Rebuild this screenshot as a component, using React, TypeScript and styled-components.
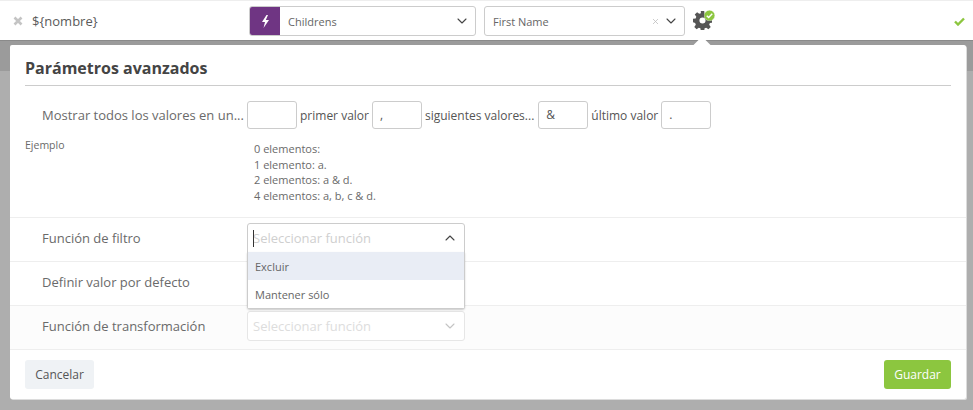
import React from "react";
import styled, { createGlobalStyle } from "styled-components";
import { ChevronDown, ChevronUp, X } from "lucide-react";

const GlobalStyle = createGlobalStyle`
  html, body {
    margin: 0;
    padding: 0;
    height: 100%;
    overflow: hidden;
  }
  body {
    font-family: "Open Sans", "Liberation Sans", sans-serif;
    color: #555;
    background: #aeaeae;
  }
  * {
    box-sizing: border-box;
  }
`;

const Page = styled.div`
  width: 973px;
  height: 410px;
  display: flex;
  flex-direction: column;
`;

const TopBar = styled.div`
  height: 41px;
  flex: none;
  background: #fff;
  border-top: 1px solid #eeeeee;
  border-bottom: 1px solid #8a8a8a;
  display: flex;
  align-items: center;
  padding: 1px 8px 0 13px;
`;

const RemoveIcon = styled.svg`
  width: 10px;
  height: 10px;
  flex: none;
`;

const VarName = styled.span`
  font-size: 13px;
  color: #5a5a5a;
  margin-left: 9px;
  width: 217px;
  flex: none;
`;

const SelectBox = styled.div<{ $width: number; $pad: number; $gap: number }>`
  width: ${(p) => p.$width}px;
  height: 30px;
  flex: none;
  background: #fff;
  border: 1px solid #cccccc;
  border-radius: 3px;
  display: flex;
  align-items: center;
  font-size: 11px;
  color: #666;
  margin-right: ${(p) => p.$gap}px;
  padding-right: ${(p) => p.$pad}px;
`;

const Badge = styled.div`
  width: 30px;
  height: 28px;
  background: #6f3583;
  display: flex;
  align-items: center;
  justify-content: center;
  margin-right: 8px;
  border-radius: 2px 0 0 2px;
`;

const SelectText = styled.span<{ $inset?: boolean }>`
  flex: 1;
  padding-left: ${(p) => (p.$inset ? "8px" : "0")};
`;

const ClearIcon = styled(X)`
  color: #bbb;
  margin-right: 3px;
`;

const GearWrap = styled.div`
  position: relative;
  width: 19px;
  height: 19px;
  margin-bottom: 1px;
  flex: none;
`;

const GearCheck = styled.svg`
  position: absolute;
  top: -1px;
  left: 11px;
  width: 11px;
  height: 11px;
`;

const Spacer = styled.div`
  flex: 1;
`;

const Backdrop = styled.div`
  flex: 1;
  padding: 4px 7px 11px 10px;
  display: flex;
  background: linear-gradient(#9b9b9b 0 30px, #aeaeae 30px);
`;

const Modal = styled.div`
  position: relative;
  flex: 1;
  background: #fff;
  border-radius: 2px;
  box-shadow: 1px 1px 0 #dcdcdc;
  display: flex;
  flex-direction: column;
`;

const Caret = styled.div`
  position: absolute;
  top: -6px;
  left: 686px;
  width: 12px;
  height: 12px;
  background: #fff;
  transform: rotate(45deg);
`;

const Header = styled.div`
  margin: 0 15px;
  height: 41px;
  border-bottom: 1px solid #cccccc;
  display: flex;
  align-items: flex-end;
  padding-bottom: 6px;
`;

const Title = styled.h2`
  margin: 0;
  font-size: 16px;
  line-height: 22px;
  font-weight: 700;
  color: #444;
`;

const Section = styled.div`
  height: 132px;
  flex: none;
  border-bottom: 1px solid #eeeeee;
  padding: 15px 0 0 15px;
`;

const InlineRow = styled.div`
  display: flex;
  align-items: center;
  height: 28px;
  font-size: 12px;
  color: #555;
  margin-left: 17px;
`;

const RowLabel = styled.span`
  width: 205px;
  flex: none;
  font-size: 13px;
  color: #6a6a6a;
  white-space: nowrap;
`;

const ShortInput = styled.div`
  width: 50px;
  height: 28px;
  border: 1px solid #cccccc;
  border-radius: 3px;
  background: #fff;
  padding-left: 7px;
  line-height: 26px;
  font-size: 12px;
  flex: none;
`;

const InlineText = styled.span<{ $wide?: boolean }>`
  margin: 0 ${(p) => (p.$wide ? "4px" : "3px")} 0 3px;
  white-space: nowrap;
`;

const Example = styled.div`
  display: flex;
  margin-top: 9px;
  font-size: 10.5px;
  color: #6a6a6a;
`;

const ExampleLabel = styled.div`
  width: 229px;
  flex: none;
`;

const ExampleLines = styled.div`
  font-size: 11px;
  line-height: 15.6px;
  margin-top: 3px;
`;

const FieldRow = styled.div<{ $shaded?: boolean }>`
  height: 44px;
  flex: none;
  display: flex;
  align-items: center;
  padding: 0 0 3px 32px;
  border-bottom: 1px solid #eeeeee;
  background: ${(p) => (p.$shaded ? "#fcfcfc" : "#fff")};
`;

const FieldLabel = styled.span`
  width: 205px;
  flex: none;
  font-size: 13px;
  color: #6a6a6a;
`;

const FieldSelect = styled.div<{ $open?: boolean; $faded?: boolean }>`
  position: relative;
  width: 218px;
  height: 30px;
  background: #fff;
  border: 1px solid ${(p) => (p.$faded ? "#e6e6e6" : "#cccccc")};
  border-radius: ${(p) => (p.$open ? "3px 3px 0 0" : "3px")};
  display: flex;
  align-items: center;
  justify-content: space-between;
  padding: 0 6px 0 5px;
  font-size: 13px;
  color: ${(p) => (p.$faded ? "#dddddd" : "#cfcfcf")};
`;

const Cursor = styled.span`
  position: absolute;
  left: 5px;
  top: 6px;
  width: 1px;
  height: 17px;
  background: #333;
`;

const Menu = styled.div`
  position: absolute;
  top: 28px;
  left: -1px;
  width: 218px;
  background: #fff;
  border: 1px solid #cccccc;
  border-top: none;
  border-radius: 0 0 3px 3px;
  box-shadow: 0 1px 2px rgba(0, 0, 0, 0.2);
  z-index: 3;
`;

const MenuItem = styled.div<{ $active?: boolean }>`
  height: 28px;
  line-height: 29px;
  padding-left: 7px;
  font-size: 11px;
  color: #666;
  background: ${(p) => (p.$active ? "#e9edf5" : "#fff")};
`;

const Footer = styled.div`
  flex: 1;
  display: flex;
  justify-content: space-between;
  align-items: flex-start;
  padding: 10px 15px 0;
`;

const Button = styled.button<{ $primary?: boolean }>`
  height: 29px;
  border: none;
  border-radius: 3px;
  font-family: inherit;
  font-size: 12px;
  padding: 0;
  width: ${(p) => (p.$primary ? "67px" : "69px")};
  background: ${(p) => (p.$primary ? "#8cc63f" : "#eff2f5")};
  color: ${(p) => (p.$primary ? "#fff" : "#555")};
`;

// eight blocky teeth, small hole, like the font-awesome cog
const gearPath =
  "M8 0h3.500l.4 2.700 1.700.7 2.200-1.600 2.400 2.400-1.600 2.200.7 1.700 2.700.4v3.500l-2.700.4-.7 1.700 1.600 2.200-2.400 2.400-2.200-1.600-1.700.7-.4 2.700H8l-.4-2.700-1.700-.7-2.200 1.600-2.400-2.400 1.600-2.200-.7-1.700L0 11.500V8l2.700-.4.7-1.700-1.600-2.200 2.400-2.400 2.200 1.600 1.700-.7zM9.750 6.600a3.150 3.150 0 1 0 0 6.300 3.150 3.150 0 0 0 0-6.300z";

const App = () => {
  return (
    <Page>
      <GlobalStyle />
      <TopBar>
        <RemoveIcon viewBox="0 0 10 10">
          <path d="M1.500 1.500l7 7m0-7l-7 7" stroke="#c4c4c4" strokeWidth="2.600" />
        </RemoveIcon>
        <VarName>{"${nombre}"}</VarName>
        <SelectBox $width={227} $pad={5} $gap={8}>
          <Badge>
            <svg width="9" height="13" viewBox="0 0 9 13">
              <path d="M5.500 0L1 7h3L2.500 13 8 5H4.800L7 0z" fill="#fff" />
            </svg>
          </Badge>
          <SelectText>Childrens</SelectText>
          <ChevronDown size={16} color="#444" strokeWidth={1.6} />
        </SelectBox>
        <SelectBox $width={201} $pad={5} $gap={8}>
          <SelectText $inset>First Name</SelectText>
          <ClearIcon size={9} />
          <ChevronDown size={16} color="#444" strokeWidth={1.6} />
        </SelectBox>
        <GearWrap>
          <svg width="19" height="19" viewBox="0 0 19.500 19.500">
            <path d={gearPath} fill="#555" fillRule="evenodd" />
          </svg>
          <GearCheck viewBox="0 0 12 12">
            <circle cx="6" cy="6" r="5.800" fill="#8cc63f" stroke="#fff" strokeWidth="0.400" />
            <path d="M3 6.200l2.100 2L9 4.200" fill="none" stroke="#fff" strokeWidth="1.600" />
          </GearCheck>
        </GearWrap>
        <Spacer />
        <svg width="11" height="9" viewBox="0 0 11 9">
          <path d="M1 4.500l3 3L10 1.500" fill="none" stroke="#8cc63f" strokeWidth="2.400" />
        </svg>
      </TopBar>
      <Backdrop>
        <Modal>
          <Caret />
          <Header>
            <Title>Parámetros avanzados</Title>
          </Header>
          <Section>
            <InlineRow>
              <RowLabel>Mostrar todos los valores en un...</RowLabel>
              <ShortInput />
              <InlineText>primer valor</InlineText>
              <ShortInput>,</ShortInput>
              <InlineText $wide>siguientes valores...</InlineText>
              <ShortInput>&amp;</ShortInput>
              <InlineText>último valor</InlineText>
              <ShortInput>.</ShortInput>
            </InlineRow>
            <Example>
              <ExampleLabel>Ejemplo</ExampleLabel>
              <ExampleLines>
                <div>0 elementos:</div>
                <div>1 elemento: a.</div>
                <div>2 elementos: a &amp; d.</div>
                <div>4 elementos: a, b, c &amp; d.</div>
              </ExampleLines>
            </Example>
          </Section>
          <FieldRow>
            <FieldLabel>Función de filtro</FieldLabel>
            <FieldSelect $open>
              <Cursor />
              Seleccionar función
              <ChevronUp size={16} color="#444" strokeWidth={1.6} />
              <Menu>
                <MenuItem $active>Excluir</MenuItem>
                <MenuItem>Mantener sólo</MenuItem>
              </Menu>
            </FieldSelect>
          </FieldRow>
          <FieldRow>
            <FieldLabel>Definir valor por defecto</FieldLabel>
          </FieldRow>
          <FieldRow $shaded>
            <FieldLabel>Función de transformación</FieldLabel>
            <FieldSelect $faded>
              Seleccionar función
              <ChevronDown size={16} color="#c4c4c4" strokeWidth={1.6} />
            </FieldSelect>
          </FieldRow>
          <Footer>
            <Button>Cancelar</Button>
            <Button $primary>Guardar</Button>
          </Footer>
        </Modal>
      </Backdrop>
    </Page>
  );
};

export default App;
